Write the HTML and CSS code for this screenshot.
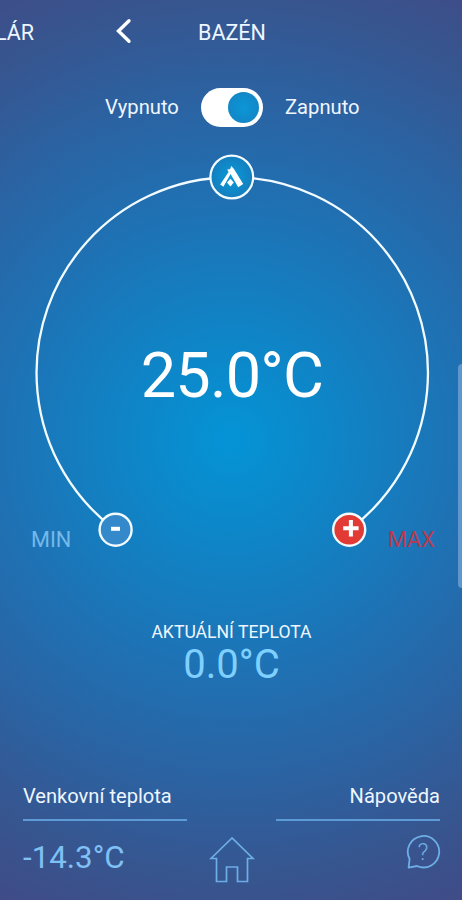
FILE: index.html
```html
<!DOCTYPE html>
<html lang="cs">

<head>
    <meta charset="UTF-8">
    <meta name="viewport" content="width=device-width, initial-scale=1.0">
    <title>Bazén</title>
    <link rel="stylesheet" href="styles.css">
</head>

<body>
    <div class="app">
        <header class="header">
            <span class="header-prev">LÁR</span>
            <svg class="header-back" width="18" height="26" viewBox="0 0 18 26">
                <path d="M15 2.8 L4.5 13 L15 23.2" fill="none" stroke="#fff" stroke-width="3.4" stroke-linecap="round" />
            </svg>
            <h1 class="header-title">BAZÉN</h1>
        </header>

        <section class="power">
            <span class="power-off">Vypnuto</span>
            <div class="switch">
                <div class="switch-knob"></div>
            </div>
            <span class="power-on">Zapnuto</span>
        </section>

        <section class="dial">
            <svg class="dial-ring" width="462" height="420" viewBox="0 146 462 420">
                <defs>
                    <radialGradient id="knob">
                        <stop offset="0" stop-color="#0a9bda" />
                        <stop offset="1" stop-color="#147dbd" />
                    </radialGradient>
                </defs>
                <path d="M115.5 530 A195.7 195.7 0 1 1 349 530" fill="none" stroke="#f2fbff" stroke-width="2.3" />
                <!-- logo -->
                <circle cx="231.8" cy="177" r="21.4" fill="url(#knob)" stroke="#f2fbff" stroke-width="2.2" />
                <path d="M231.3 166 L233.8 168.8 L243.2 184 L238.2 187.3 L230.6 174 L223.4 186.8 L220.2 184.6 L228.6 172 L227.2 169.6 L230 169.2 Z" fill="#fff" />
                <path d="M230.4 178.8 L233.8 182.6 L230.4 186.4 L227 182.6 Z" fill="#fff" />
                <!-- minus -->
                <circle cx="115.6" cy="529.7" r="16" fill="#3389ca" stroke="#f2fbff" stroke-width="2.4" />
                <path d="M111 528.8 h9" stroke="#fff" stroke-width="4" />
                <!-- plus -->
                <circle cx="349.2" cy="529.7" r="16" fill="#e23b36" stroke="#f2fbff" stroke-width="2.4" />
                <path d="M343.2 528.2 h15.4 M350.9 520 v16.4" stroke="#fff" stroke-width="4" />
            </svg>
            <div class="dial-value">25.0°C</div>
            <div class="dial-min">MIN</div>
            <div class="dial-max">MAX</div>
        </section>

        <section class="current">
            <div class="current-label">AKTUÁLNÍ TEPLOTA</div>
            <div class="current-value">0.0°C</div>
        </section>

        <footer class="footer">
            <div class="footer-col">
                <div class="footer-label">Venkovní teplota</div>
                <div class="footer-value">-14.3°C</div>
            </div>
            <svg class="footer-home" width="46" height="48" viewBox="0 0 46 48">
                <path d="M23 2 L2 22.5 H7.5 V45.5 H17.5 V31 H28.5 V45.5 H38.5 V22.5 H44 Z" fill="none" stroke="#6eaee6" stroke-width="1.7" />
            </svg>
            <div class="footer-col footer-help">
                <div class="footer-label">Nápověda</div>
                <div class="help">
                    <svg width="36" height="36" viewBox="0 0 36 36">
                        <path d="M3.6 33.6 L4.6 25 A15.7 15.7 0 1 1 12 32 Z" fill="none" stroke="#6eaee6" stroke-width="1.8" stroke-linejoin="round" />
                    </svg>
                    <span class="help-mark">?</span>
                </div>
            </div>
        </footer>

        <div class="edge-handle"></div>
    </div>
</body>

</html>
```

FILE: styles.css
```css
/* General */
body {
    margin: 0;
    font-family: Roboto, sans-serif;
    color: #eef6ff;
}

.app {
    position: relative;
    display: flex;
    flex-direction: column;
    width: 462px;
    height: 900px;
    overflow: hidden;
    background: radial-gradient(circle at 231px 440px, #0494d6 0, #0f84c6 110px, #1e72b4 230px, #2a64a4 330px, #37558f 440px, #3f4c88 510px);
}

/* Header */
.header {
    display: flex;
    align-items: center;
    height: 64px;
}

.header-prev {
    width: 34px;
    display: flex;
    justify-content: flex-end;
    font-size: 21.5px;
}

.header-back {
    margin-left: 80px;
    margin-top: -2px;
}

.header-title {
    margin: 0 0 0 66px;
    font-size: 21.5px;
    font-weight: 400;
}

/* Switch */
.power {
    display: flex;
    align-items: center;
    justify-content: center;
    height: 40px;
    margin-top: 23px;
    margin-left: 2px;
    font-size: 20.2px;
}

.power-off,
.power-on {
    width: 74px;
    white-space: nowrap;
}

.switch {
    display: flex;
    align-items: center;
    justify-content: flex-end;
    box-sizing: border-box;
    width: 62px;
    height: 39px;
    margin: 0 22px;
    padding-right: 4px;
    border-radius: 20px;
    background: #fff;
}

.switch-knob {
    width: 31px;
    height: 31px;
    border-radius: 50%;
    background: radial-gradient(circle, #0b97d7, #1680c0);
}

/* Dial */
.dial {
    position: relative;
    height: 420px;
    margin-top: 19px;
}

.dial-ring {
    display: block;
}

.dial-value {
    position: absolute;
    top: 190px;
    left: 0;
    width: 464px;
    font-size: 63px;
    letter-spacing: -0.8px;
    line-height: 80px;
    text-align: center;
    color: #fff;
}

.dial-min,
.dial-max {
    position: absolute;
    top: 380px;
    font-size: 21.7px;
    line-height: 28px;
}

.dial-min {
    left: 31px;
    color: #74b9ea;
}

.dial-max {
    left: 388px;
    color: #b83a50;
}

/* Current temperature */
.current {
    margin-top: 54px;
    width: 463px;
    text-align: center;
}

.current-label {
    font-size: 17.6px;
    line-height: 24px;
}

.current-value {
    font-size: 40px;
    line-height: 42px;
    color: #7fd0ff;
}

/* Footer */
.footer {
    display: flex;
    justify-content: space-between;
    margin: 96px 22px 0 23px;
}

.footer-col {
    width: 164px;
}

.footer-label {
    height: 37px;
    border-bottom: 2px solid #5c9bd6;
    font-size: 20.1px;
    line-height: 28px;
    white-space: nowrap;
}

.footer-value {
    margin-top: 17px;
    font-size: 31.3px;
    line-height: 40px;
    color: #7fc0f5;
}

.footer-home {
    margin-top: 54px;
}

.footer-help {
    text-align: right;
}

.help {
    position: relative;
    display: inline-block;
    width: 36px;
    height: 36px;
    margin-top: 13px;
    margin-right: -1px;
}

.help-mark {
    position: absolute;
    top: 5px;
    left: 0;
    width: 36px;
    font-size: 24px;
    font-weight: 300;
    line-height: 26px;
    text-align: center;
    color: #6eaee6;
}

/* Edge panel handle */
.edge-handle {
    position: absolute;
    top: 364px;
    right: -4px;
    width: 8px;
    height: 224px;
    border-radius: 4px;
    background: #5f97cc;
}
```
